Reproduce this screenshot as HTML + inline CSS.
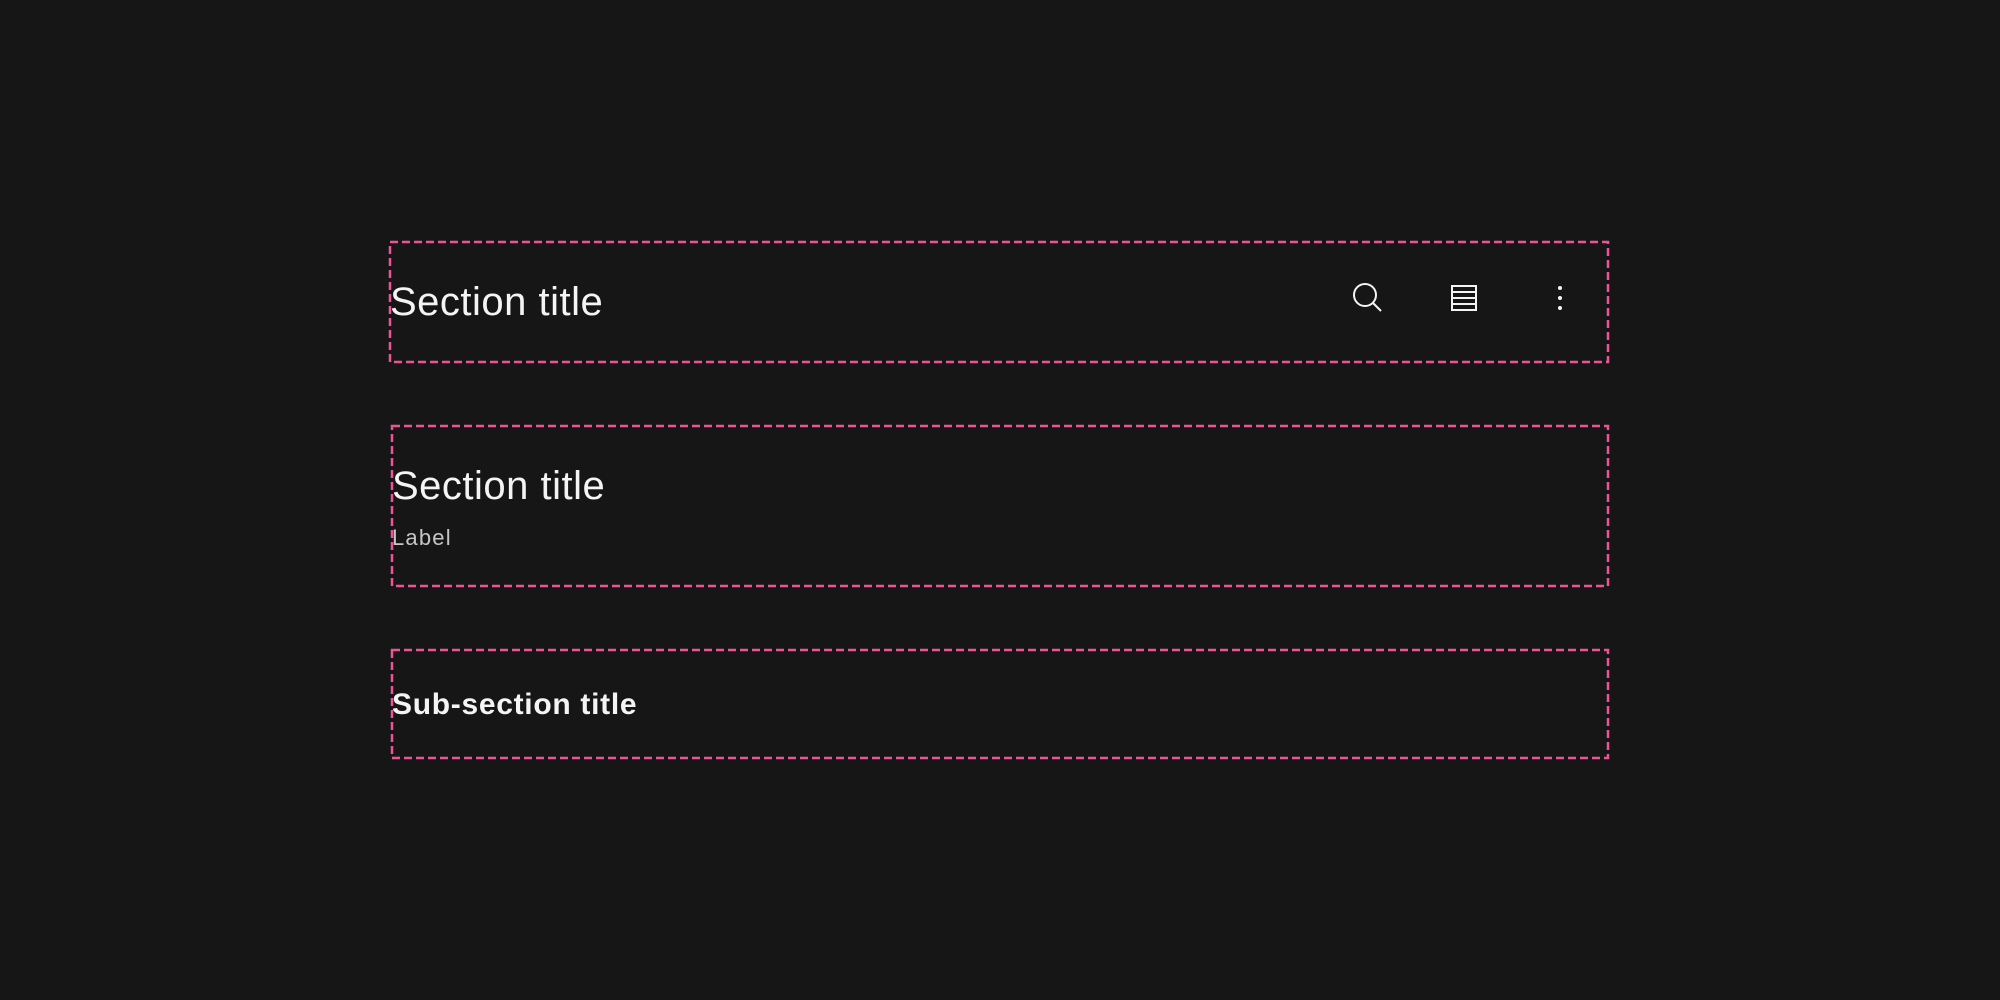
<!DOCTYPE html>
<html><head><meta charset="utf-8"><style>
html,body{margin:0;padding:0;background:#161616;width:2000px;height:1000px;overflow:hidden;font-family:"Liberation Sans",sans-serif;color:#f4f4f4}
.t{position:absolute;white-space:nowrap}
</style></head><body>
<svg width="2000" height="1000" style="position:absolute;left:0;top:0">
<g fill="none" stroke="#ee5396" stroke-width="2.5" stroke-dasharray="8 4">
<rect x="390" y="242" width="1218" height="120"/>
<rect x="392" y="426" width="1216" height="160"/>
<rect x="392" y="650" width="1216" height="108"/>
</g>
<g fill="none" stroke="#f4f4f4" stroke-width="2">
<circle cx="1365" cy="295" r="11"/>
<line x1="1373" y1="303" x2="1381" y2="311"/>
<rect x="1452" y="286" width="24" height="24"/>
<line x1="1452" y1="292" x2="1476" y2="292"/>
<line x1="1452" y1="298" x2="1476" y2="298"/>
<line x1="1452" y1="304" x2="1476" y2="304"/>
</g>
<g fill="#f4f4f4"><circle cx="1560" cy="288" r="2"/><circle cx="1560" cy="298" r="2"/><circle cx="1560" cy="308" r="2"/></g>
</svg>
<div class="t" style="left:390px;top:278px;font-size:40px;line-height:48px;letter-spacing:0.5px">Section title</div>
<div class="t" style="left:392px;top:462px;font-size:40px;line-height:48px;letter-spacing:0.5px">Section title</div>
<div class="t" style="left:392px;top:524px;font-size:22px;line-height:28px;color:#c6c6c6;letter-spacing:1.2px">Label</div>
<div class="t" style="left:392px;top:687px;font-size:30px;line-height:36px;font-weight:bold;letter-spacing:0.7px">Sub-section title</div>
</body></html>
